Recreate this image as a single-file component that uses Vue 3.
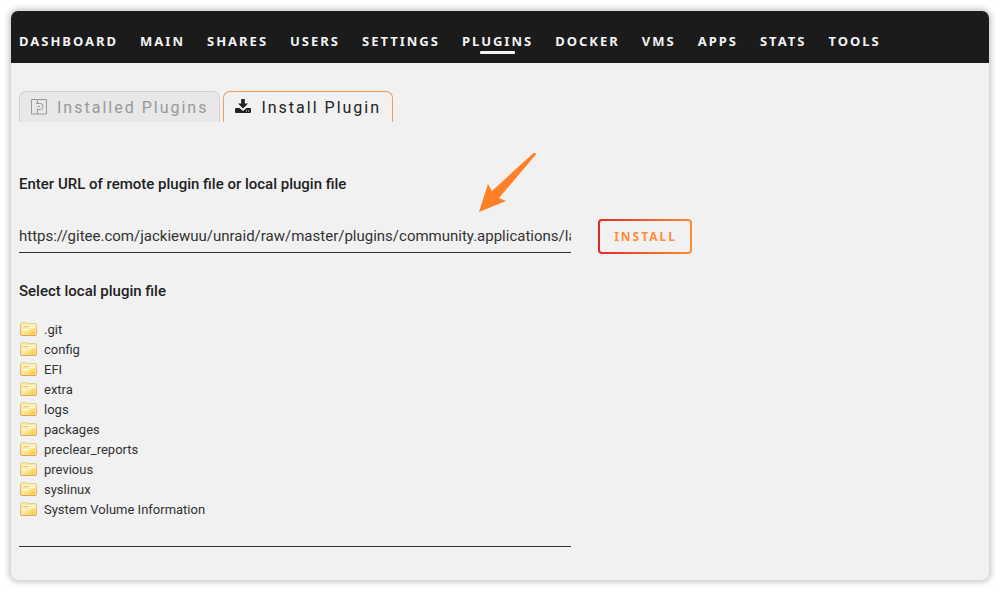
<script setup>
import { ref } from 'vue'

const menu = ['DASHBOARD', 'MAIN', 'SHARES', 'USERS', 'SETTINGS', 'PLUGINS', 'DOCKER', 'VMS', 'APPS', 'STATS', 'TOOLS']
const active = ref('PLUGINS')
const tab = ref('install')
const url = ref('https://gitee.com/jackiewuu/unraid/raw/master/plugins/community.applications/latest.plg')
const folders = ['.git', 'config', 'EFI', 'extra', 'logs', 'packages', 'preclear_reports', 'previous', 'syslinux', 'System Volume Information']
</script>

<template>
  <div class="panel">
    <nav class="menu">
      <a v-for="item in menu" :key="item" href="#" :class="{ active: item === active }" @click.prevent="active = item">{{ item }}</a>
    </nav>
    <main class="content">
      <div class="tabs" role="tablist">
        <button type="button" role="tab" class="tab" :class="{ selected: tab === 'installed' }" :aria-selected="tab === 'installed'" @click="tab = 'installed'">
          <svg width="16" height="16" viewBox="0 0 16 16" fill="none" stroke="currentColor" aria-hidden="true">
            <path d="M.5.5h15v14.500H.5zM6.500.5v4M5 4.500h4.500q2.500 0 2.500 3t-2.500 3H6.500V15M5.500 10.500h1M6.500 7.500h2.500" />
          </svg>
          Installed Plugins
        </button>
        <button type="button" role="tab" class="tab" :class="{ selected: tab === 'install' }" :aria-selected="tab === 'install'" @click="tab = 'install'">
          <svg width="16" height="16" viewBox="0 0 16 16" fill="currentColor" aria-hidden="true">
            <path d="M6.200 0h3.600v4.500H13L8 9.500 3 4.500h3.200z" />
            <path fill-rule="evenodd" d="M1 9h3.500L8 12l3.500-3H15q1 0 1 1V13q0 1-1 1H1q-1 0-1-1v-3q0-1 1-1zM11 11.500v1h1v-1zM13 11.500v1h1v-1z" />
          </svg>
          Install Plugin
        </button>
      </div>

      <form class="remote" @submit.prevent>
        <label for="plugin-url" class="heading">Enter URL of remote plugin file or local plugin file</label>
        <div class="entry">
          <input id="plugin-url" v-model="url" type="text" spellcheck="false" />
          <button type="submit" class="install">INSTALL</button>
          <svg class="arrow" width="58" height="60" viewBox="0 0 58 60" aria-hidden="true">
            <path d="M56 1q2 0 0 2.500L20 46l7 3L0 60l9-28 4 7L54 1.500q1-1 2-.500z" fill="#ff8027" />
          </svg>
        </div>
      </form>

      <section class="local">
        <h2 class="heading">Select local plugin file</h2>
        <ul>
          <li v-for="name in folders" :key="name">
            <svg width="17" height="14" viewBox="0 0 17 14" aria-hidden="true">
              <defs>
                <linearGradient id="folder-face" x1="0" y1="0" x2="1" y2="1">
                  <stop offset="0" stop-color="#fffbe2" />
                  <stop offset=".5" stop-color="#f9e58b" />
                  <stop offset="1" stop-color="#efc51f" />
                </linearGradient>
                <linearGradient id="folder-edge" x1="0" y1="0" x2="0" y2="1">
                  <stop offset="0" stop-color="#ecd189" />
                  <stop offset="1" stop-color="#dfa45e" />
                </linearGradient>
              </defs>
              <path d="M.5 2Q.5.500 2 .500h4q1 0 1.500 1H15q1.500 0 1.500 1.500v9q0 1.500-1.500 1.500H2Q.5 13.500.5 12z" fill="#f8e7ae" stroke="url(#folder-edge)" />
              <path d="M2.500 3.500h4M8 3.500h7" stroke="#fff8d8" />
              <path d="M3.500 4.500h4" stroke="#ebc66b" />
              <path d="M2.500 7.500h5l2-2h5.500V12.500H2.500z" fill="url(#folder-face)" />
              <path d="M2.500 7.500h5l2-2H15" fill="none" stroke="#fffbe5" />
            </svg>
            <a href="#" @click.prevent>{{ name }}</a>
          </li>
        </ul>
      </section>
    </main>
  </div>
</template>

<style>
body {
  margin: 0;
  background: #fff;
}
</style>

<style scoped>
.panel {
  margin: 11px;
  overflow: hidden;
  border-radius: 7px;
  background: #f1f1f1;
  box-shadow: 0 0 0 1px #d9d9d9, 0 0 7px 1px rgba(0, 0, 0, 0.3);
  color: #222;
  font-family: Roboto, "Liberation Sans", sans-serif;
  font-size: 14px;
}
.menu {
  display: flex;
  gap: 22px;
  padding: 20px 8px 12px;
  background: #1c1b1b;
}
.menu a {
  position: relative;
  color: #f2f2f2;
  font-family: "Noto Sans", sans-serif;
  font-size: 13px;
  font-weight: 700;
  letter-spacing: 2px;
  line-height: 20px;
  text-decoration: none;
}
.menu a.active::after {
  content: "";
  position: absolute;
  left: 25%;
  right: 25%;
  bottom: -3px;
  height: 3px;
  border-radius: 1px;
  background: #f2f2f2;
}
.content {
  padding: 28px 8px 33px;
}
.tabs {
  display: flex;
  gap: 3px;
}
.tab {
  display: flex;
  align-items: center;
  gap: 10px;
  height: 31px;
  padding: 0 11px;
  border: 1px solid #d2d2d2;
  border-bottom: 0;
  border-radius: 7px 7px 0 0;
  background: #e8e8e8;
  color: #999;
  font: 16px Roboto, sans-serif;
  letter-spacing: 2px;
}
.tab.selected {
  border-color: #f79a54;
  background: #f1f1f1;
  color: #222;
}
.heading {
  display: block;
  margin: 0;
  font-size: 15px;
  font-weight: 500;
  line-height: 20px;
}
.remote {
  padding-top: 52px;
}
.entry {
  position: relative;
  display: flex;
  align-items: center;
  gap: 27px;
  margin-top: 25px;
}
.entry input {
  box-sizing: border-box;
  width: 57.4%;
  height: 33px;
  padding: 0;
  border: 0;
  border-bottom: 1px solid #333;
  border-radius: 0;
  outline: 0;
  background: transparent;
  color: #333;
  font: 15px Roboto, sans-serif;
}
.install {
  height: 35px;
  padding: 0 13px 0 14px;
  border: 2px solid transparent;
  border-radius: 4px;
  background: linear-gradient(#f1f1f1, #f1f1f1) padding-box, linear-gradient(90deg, #e22828, #ff8c2f) border-box;
  color: #ff8c3b;
  font: 700 12px "Noto Sans", sans-serif;
  letter-spacing: 2px;
}
.arrow {
  position: absolute;
  left: 460px;
  bottom: 42px;
}
.local {
  width: 57.4%;
  margin-top: 27px;
  padding-bottom: 27px;
  border-bottom: 1px solid #333;
}
.local ul {
  margin: 18px 0 0;
  padding: 0;
  list-style: none;
}
.local li {
  display: flex;
  align-items: center;
  gap: 7px;
  height: 20px;
  padding-left: 1px;
}
.local a {
  color: #333;
  font-size: 13px;
  text-decoration: none;
}
</style>
